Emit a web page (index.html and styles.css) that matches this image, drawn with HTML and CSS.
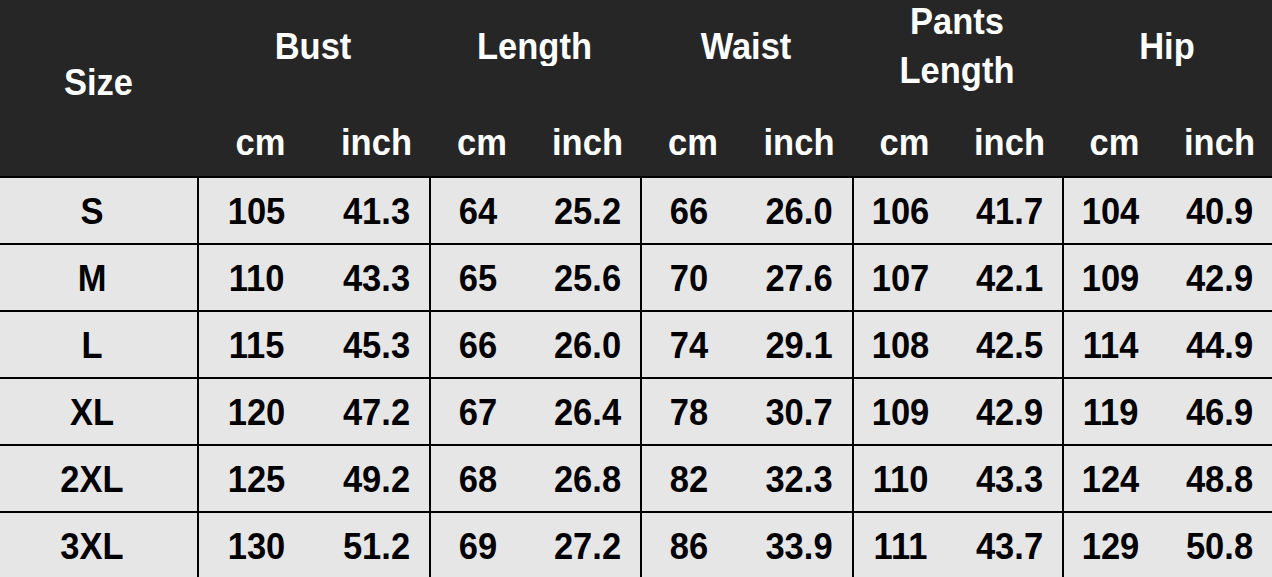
FILE: index.html
```html
<!DOCTYPE html>
<html lang="en">
<head>
<meta charset="utf-8">
<title>Size Chart</title>
<link rel="stylesheet" href="styles.css">
</head>
<body>
<div class="chart">
  <div class="head">
    <div class="h-size"><span class="t">Size</span></div>
    <div class="h-title"><span class="t">Bust</span></div>
    <div class="h-title"><span class="t">Length</span></div>
    <div class="h-title"><span class="t">Waist</span></div>
    <div class="h-title two"><span class="t">Pants<br>Length</span></div>
    <div class="h-title"><span class="t">Hip</span></div>
    <div class="h-unit"><span class="t">cm</span></div>
    <div class="h-unit"><span class="t">inch</span></div>
    <div class="h-unit"><span class="t">cm</span></div>
    <div class="h-unit"><span class="t">inch</span></div>
    <div class="h-unit"><span class="t">cm</span></div>
    <div class="h-unit"><span class="t">inch</span></div>
    <div class="h-unit"><span class="t">cm</span></div>
    <div class="h-unit"><span class="t">inch</span></div>
    <div class="h-unit"><span class="t">cm</span></div>
    <div class="h-unit"><span class="t">inch</span></div>
  </div>

  <div class="row">
    <div class="c size"><span class="t">S</span></div>
    <div class="c cm"><span class="t">105</span></div><div class="c in"><span class="t">41.3</span></div>
    <div class="c cm"><span class="t">64</span></div><div class="c in"><span class="t">25.2</span></div>
    <div class="c cm"><span class="t">66</span></div><div class="c in"><span class="t">26.0</span></div>
    <div class="c cm"><span class="t">106</span></div><div class="c in"><span class="t">41.7</span></div>
    <div class="c cm"><span class="t">104</span></div><div class="c in"><span class="t">40.9</span></div>
  </div>
  <div class="row">
    <div class="c size"><span class="t">M</span></div>
    <div class="c cm"><span class="t">110</span></div><div class="c in"><span class="t">43.3</span></div>
    <div class="c cm"><span class="t">65</span></div><div class="c in"><span class="t">25.6</span></div>
    <div class="c cm"><span class="t">70</span></div><div class="c in"><span class="t">27.6</span></div>
    <div class="c cm"><span class="t">107</span></div><div class="c in"><span class="t">42.1</span></div>
    <div class="c cm"><span class="t">109</span></div><div class="c in"><span class="t">42.9</span></div>
  </div>
  <div class="row">
    <div class="c size"><span class="t">L</span></div>
    <div class="c cm"><span class="t">115</span></div><div class="c in"><span class="t">45.3</span></div>
    <div class="c cm"><span class="t">66</span></div><div class="c in"><span class="t">26.0</span></div>
    <div class="c cm"><span class="t">74</span></div><div class="c in"><span class="t">29.1</span></div>
    <div class="c cm"><span class="t">108</span></div><div class="c in"><span class="t">42.5</span></div>
    <div class="c cm"><span class="t">114</span></div><div class="c in"><span class="t">44.9</span></div>
  </div>
  <div class="row">
    <div class="c size"><span class="t">XL</span></div>
    <div class="c cm"><span class="t">120</span></div><div class="c in"><span class="t">47.2</span></div>
    <div class="c cm"><span class="t">67</span></div><div class="c in"><span class="t">26.4</span></div>
    <div class="c cm"><span class="t">78</span></div><div class="c in"><span class="t">30.7</span></div>
    <div class="c cm"><span class="t">109</span></div><div class="c in"><span class="t">42.9</span></div>
    <div class="c cm"><span class="t">119</span></div><div class="c in"><span class="t">46.9</span></div>
  </div>
  <div class="row">
    <div class="c size"><span class="t">2XL</span></div>
    <div class="c cm"><span class="t">125</span></div><div class="c in"><span class="t">49.2</span></div>
    <div class="c cm"><span class="t">68</span></div><div class="c in"><span class="t">26.8</span></div>
    <div class="c cm"><span class="t">82</span></div><div class="c in"><span class="t">32.3</span></div>
    <div class="c cm"><span class="t">110</span></div><div class="c in"><span class="t">43.3</span></div>
    <div class="c cm"><span class="t">124</span></div><div class="c in"><span class="t">48.8</span></div>
  </div>
  <div class="row">
    <div class="c size"><span class="t">3XL</span></div>
    <div class="c cm"><span class="t">130</span></div><div class="c in"><span class="t">51.2</span></div>
    <div class="c cm"><span class="t">69</span></div><div class="c in"><span class="t">27.2</span></div>
    <div class="c cm"><span class="t">86</span></div><div class="c in"><span class="t">33.9</span></div>
    <div class="c cm"><span class="t">111</span></div><div class="c in"><span class="t">43.7</span></div>
    <div class="c cm"><span class="t">129</span></div><div class="c in"><span class="t">50.8</span></div>
  </div>
</div>
</body>
</html>
```

FILE: styles.css
```css
* { box-sizing: border-box; }

html, body {
  margin: 0;
  padding: 0;
  background: #e6e6e6;
  overflow: hidden;
}

.chart {
  width: 1272px;
  font-family: "Liberation Sans", Arial, sans-serif;
  font-weight: bold;
  font-size: 34.5px;
  line-height: 40px;
}

.t {
  display: inline-block;
  transform: scaleY(1.05);
}

.head,
.row {
  display: grid;
  grid-template-columns: 197px 127px 105px 106px 105px 106px 106px 105px 105px 105px 105px;
}

.head {
  grid-template-rows: 91px 85px;
  background: #262626;
  color: #ffffff;
  border-bottom: 2px solid #000000;
}

.h-size {
  grid-row: 1 / span 2;
  display: flex;
  align-items: center;
  justify-content: center;
  padding-bottom: 12px;
}

.h-title {
  grid-column: span 2;
  display: flex;
  align-items: center;
  justify-content: center;
  text-align: center;
}

.h-title.two {
  line-height: 46px;
}

.h-unit {
  display: flex;
  align-items: center;
  justify-content: center;
  padding-top: 16px;
}

.row {
  height: 67px;
  border-bottom: 2px solid #000000;
  color: #000000;
}

.c {
  display: flex;
  align-items: center;
  justify-content: center;
}

.c.size {
  padding-right: 13px;
}

.c.cm {
  border-left: 2px solid #000000;
  padding-right: 10px;
}

.c.in {
  padding-left: 0;
}
```
